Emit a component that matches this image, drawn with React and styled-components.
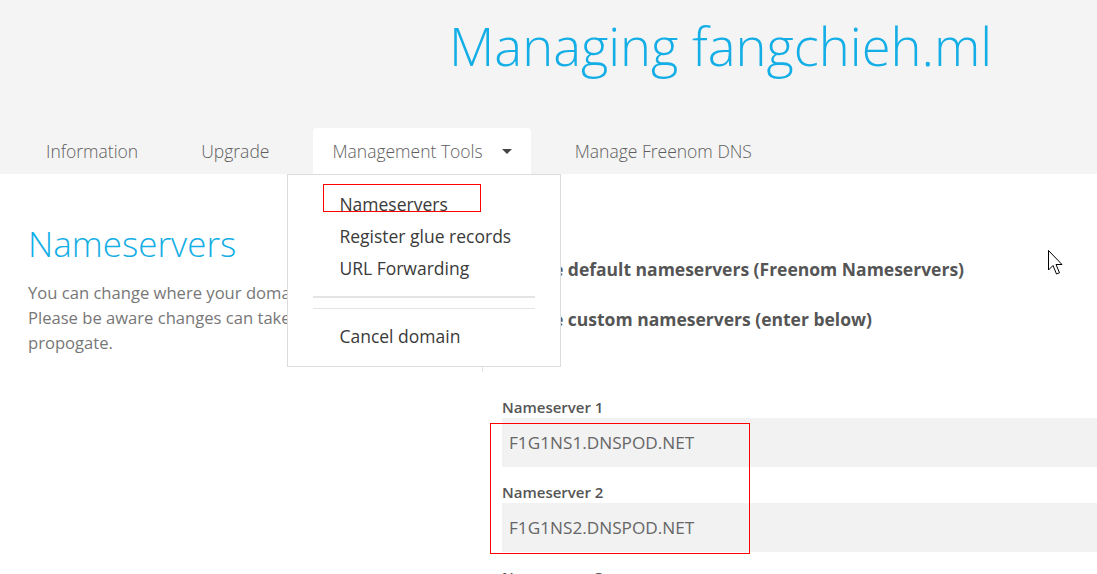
import React from "react";
import styled, { createGlobalStyle } from "styled-components";

const Global = createGlobalStyle`
  html, body { margin: 0; padding: 0; background: #fff; overflow: hidden; }
  body { font-family: "Open Sans", "Noto Sans", sans-serif; }
  * { box-sizing: border-box; }
`;

const Page = styled.div`
  position: relative;
  width: 1097px;
  height: 574px;
  overflow: hidden;
`;

const Header = styled.header`
  background: #f4f4f4;
  padding-top: 12px;
`;

const Title = styled.h1`
  margin: 0;
  padding-left: 449px;
  font-size: 52.5px;
  line-height: 67px;
  font-weight: 300;
  color: #14aee6;
  white-space: nowrap;
`;

const TabBar = styled.nav`
  display: flex;
  gap: 25px;
  margin-top: 49px;
  padding-left: 27px;
  height: 46px;
`;

const Tab = styled.div`
  position: relative;
  display: flex;
  align-items: center;
  height: 46px;
  padding: 0 19px;
  font-size: 17.5px;
  font-weight: 300;
  color: #5e5e5e;
  white-space: nowrap;
  background: ${(p) => (p.$active ? "#fff" : "transparent")};
  border-radius: 4px 4px 0 0;
`;

const Caret = styled.span`
  margin-left: 19px;
  width: 0;
  height: 0;
  border-left: 5px solid transparent;
  border-right: 5px solid transparent;
  border-top: 5px solid #444;
`;

const Menu = styled.div`
  position: absolute;
  top: 100%;
  left: -26px;
  width: 274px;
  height: 193px;
  background: #fff;
  border: 1px solid #dcdcdc;
  padding: 13px 0 13px;
  z-index: 5;
  font-weight: 400;
`;

const MenuItem = styled.div`
  position: relative;
  padding-left: 51px;
  font-size: 17.5px;
  line-height: 32px;
  color: #3a3a3a;
`;

const Divider = styled.div`
  margin: 12px 25px 11px;
  height: 13px;
  border-top: 2px solid #e4e4e4;
  border-bottom: 1px solid #e4e4e4;
`;

const Highlight = styled.div`
  position: absolute;
  border: 1px solid #ff0000;
  pointer-events: none;
  z-index: 6;
`;

const Main = styled.main`
  display: flex;
`;

const LeftCol = styled.section`
  width: 482px;
  flex: none;
  padding-left: 28px;
`;

const Heading = styled.h2`
  margin: 50px 0 0;
  font-size: 35px;
  line-height: 40px;
  font-weight: 300;
  color: #14aee6;
`;

const Intro = styled.p`
  margin: 16px 0 0;
  font-size: 16.6px;
  line-height: 25px;
  color: #777;
  font-weight: 400;
  white-space: nowrap;
`;

const RightCol = styled.section`
  width: 700px;
  flex: none;
  padding-top: 66px;
`;

const RadioBox = styled.div`
  border-left: 1px solid #e3e3e3;
  padding: 17px 0 41px 25px;
  display: flex;
  flex-direction: column;
  gap: 26px;
`;

const RadioRow = styled.label`
  display: flex;
  align-items: center;
  font-size: 17.5px;
  line-height: 24px;
  font-weight: 700;
  color: #555;
  white-space: nowrap;
`;

const RadioDot = styled.span`
  width: 13px;
  height: 13px;
  border-radius: 50%;
  border: 1px solid #999;
  margin-right: 10px;
  background: ${(p) => (p.$checked ? "radial-gradient(#333 35%, #fff 40%)" : "#fff")};
`;

const Fields = styled.div`
  position: relative;
  margin-top: 25px;
  padding-left: 20px;
  display: flex;
  flex-direction: column;
  gap: 15px;
`;

const Field = styled.div`
  display: flex;
  flex-direction: column;
  gap: 1px;
`;

const FieldLabel = styled.div`
  font-size: 15px;
  line-height: 20px;
  font-weight: 600;
  color: #555;
`;

const Input = styled.div`
  height: 49px;
  background: #f2f2f2;
  display: flex;
  align-items: center;
  padding-left: 7px;
  font-size: 17.2px;
  color: #666;
`;

const Cursor = styled.svg`
  position: absolute;
  left: 1047px;
  top: 249px;
`;

export default function App() {
  return (
    <Page>
      <Global />
      <Header>
        <Title>Managing fangchieh.ml</Title>
        <TabBar>
          <Tab>Information</Tab>
          <Tab>Upgrade</Tab>
          <Tab $active>
            Management Tools
            <Caret />
            <Menu>
              <MenuItem>
                Nameservers
                <Highlight style={{ left: 35, top: -4, width: 158, height: 28 }} />
              </MenuItem>
              <MenuItem>Register glue records</MenuItem>
              <MenuItem>URL Forwarding</MenuItem>
              <Divider />
              <MenuItem>Cancel domain</MenuItem>
            </Menu>
          </Tab>
          <Tab>Manage Freenom DNS</Tab>
        </TabBar>
      </Header>
      <Main>
        <LeftCol>
          <Heading>Nameservers</Heading>
          <Intro>
            You can change where your domain points to here.
            <br />
            Please be aware changes can take up to 24 hours to
            <br />
            propogate.
          </Intro>
        </LeftCol>
        <RightCol>
          <RadioBox>
            <RadioRow>
              <RadioDot />
              Use default nameservers (Freenom Nameservers)
            </RadioRow>
            <RadioRow>
              <RadioDot $checked />
              Use custom nameservers (enter below)
            </RadioRow>
          </RadioBox>
          <Fields>
            <Field>
              <FieldLabel>Nameserver 1</FieldLabel>
              <Input>F1G1NS1.DNSPOD.NET</Input>
            </Field>
            <Field>
              <FieldLabel>Nameserver 2</FieldLabel>
              <Input>F1G1NS2.DNSPOD.NET</Input>
            </Field>
            <Field>
              <FieldLabel>Nameserver 3</FieldLabel>
              <Input />
            </Field>
            <Highlight style={{ left: 8, top: 26, width: 260, height: 131 }} />
          </Fields>
        </RightCol>
      </Main>
      <Cursor width="17" height="27" viewBox="0 0 17 27">
        <path
          d="M1.5 1.5 L1.5 21 L6 16.5 L9.5 25 L12.5 23.8 L9 15.5 L15 15.5 Z"
          fill="#fff"
          stroke="#000"
          strokeWidth="1"
          strokeLinejoin="miter"
        />
      </Cursor>
    </Page>
  );
}
